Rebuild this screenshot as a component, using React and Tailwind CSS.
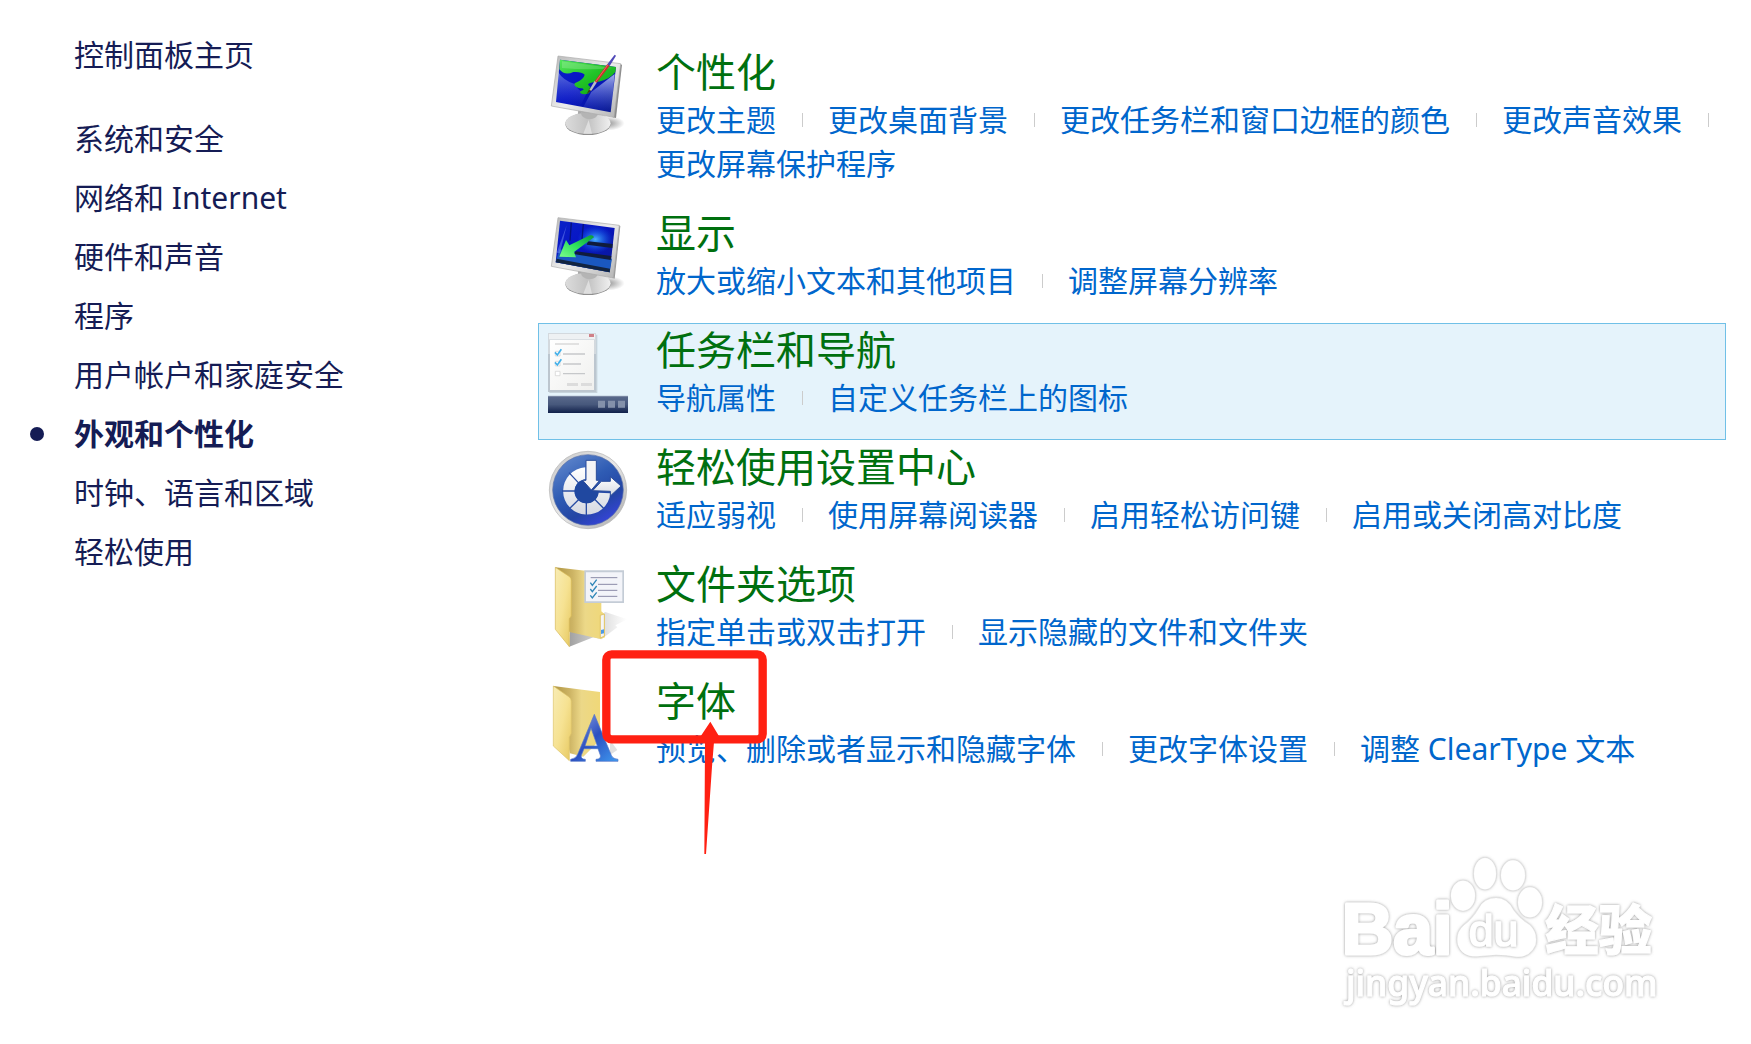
import React from "react";

const sidebarItems = [
  "系统和安全",
  "网络和 Internet",
  "硬件和声音",
  "程序",
  "用户帐户和家庭安全",
  "外观和个性化",
  "时钟、语言和区域",
  "轻松使用",
];

function Stand({ id }) {
  return (
    <>
      <ellipse cx="232" cy="250" rx="52" ry="22" fill={`url(#${id}-shadow)`} />
      <path d="M146 203 L214 216 L208 236 L142 232 Z" fill="#a9a9a9" />
      <ellipse cx="174" cy="252" rx="68" ry="33" fill="#8f8f8f" />
      <ellipse cx="174" cy="250" rx="68" ry="32" fill={`url(#${id}-base)`} />
      <path d="M152 216 L204 222 Q200 236 178 238 Q154 236 152 216 Z" fill="#b4b4b4" />
      <path d="M176 240 L160 281 L186 281 Z" fill="#fff" opacity=".45" />
    </>
  );
}

function MonitorDefs({ id }) {
  return (
    <defs>
      <linearGradient id={`${id}-screen`} x1="0" y1="0" x2="1" y2="1">
        <stop offset="0" stopColor="#0a22c8" />
        <stop offset=".45" stopColor="#0714c4" />
        <stop offset="1" stopColor="#0a1a8c" />
      </linearGradient>
      <linearGradient id={`${id}-frame`} x1="0" y1="0" x2="1" y2="1">
        <stop offset="0" stopColor="#b9b9b9" />
        <stop offset=".5" stopColor="#ececec" />
        <stop offset="1" stopColor="#b2b2b2" />
      </linearGradient>
      <linearGradient id={`${id}-base`} x1="0" y1="0" x2="1" y2="0">
        <stop offset="0" stopColor="#dcdcdc" />
        <stop offset=".5" stopColor="#c2c2c2" />
        <stop offset="1" stopColor="#f0f0f0" />
      </linearGradient>
      <radialGradient id={`${id}-shadow`}>
        <stop offset="0" stopColor="#777" stopOpacity=".8" />
        <stop offset="1" stopColor="#777" stopOpacity="0" />
      </radialGradient>
      <linearGradient id={`${id}-glare`} x1="0" y1="0" x2="0" y2="1">
        <stop offset="0" stopColor="#dfe8ff" stopOpacity=".9" />
        <stop offset="1" stopColor="#7d96ee" stopOpacity="0" />
      </linearGradient>
      <linearGradient id={`${id}-green`} x1="0" y1="0" x2="1" y2="1">
        <stop offset="0" stopColor="#56e65c" />
        <stop offset=".5" stopColor="#22c428" />
        <stop offset="1" stopColor="#0aa012" />
      </linearGradient>
      <radialGradient id={`${id}-glow`}>
        <stop offset="0" stopColor="#48b4ff" />
        <stop offset="1" stopColor="#0a5cf0" stopOpacity="0" />
      </radialGradient>
      <linearGradient id={`${id}-arrow`} x1="1" y1="0" x2="0" y2="1">
        <stop offset="0" stopColor="#0c9a38" />
        <stop offset=".5" stopColor="#2fe05c" />
        <stop offset="1" stopColor="#7dff8c" />
      </linearGradient>
    </defs>
  );
}

function PersonalizeIcon() {
  return (
    <svg viewBox="48 39 252 252" className="size-[84px] shrink-0" aria-hidden="true">
      <MonitorDefs id="pz" />
      <Stand id="pz" />
      <path d="M266 71 L276 74 L258 234 L248 232 Z" fill="#8c8c8c" />
      <path d="M84 48 L272 71 L252 232 L64 198 Z" fill="url(#pz-frame)" stroke="#aaa" strokeWidth="2" />
      <path d="M90 59 L258 81 L242 217 L78 186 Z" fill="url(#pz-screen)" />
      <path d="M84 95 Q98 120 134 132 Q150 160 170 160 L150 200 L78 186 Z" fill="url(#pz-glare)" opacity=".45" />
      <path d="M184 156 L254 102 L243 217 L160 201 Z" fill="url(#pz-glare)" opacity=".8" />
      <path
        d="M90 59 L258 81 L256 96 Q240 118 206 125 Q176 126 174 134 Q190 146 176 160 Q160 166 150 158 Q150 152 160 150 Q164 144 146 144 Q130 138 134 130 Q162 118 164 104 Q154 94 130 96 Q104 108 88 88 Z"
        fill="url(#pz-green)"
      />
      <path d="M96 64 L248 84 Q180 92 96 84 Z" fill="#fff" opacity=".18" />
      <path d="M170 162 L180 144 L188 148 Z" fill="#4b2c12" />
      <path d="M178 150 L194 122 L201 127 L184 152 Z" fill="#b8bcc4" />
      <path d="M194 124 L232 72 L239 77 L200 128 Z" fill="#cf2a2a" />
      <path d="M197 125 L234 74" stroke="#f58a7c" strokeWidth="2" />
      <path d="M232 73 L254 44 L258 47 L239 78 Z" fill="#4f48b8" />
    </svg>
  );
}

function DisplayIcon() {
  return (
    <svg viewBox="48 42 252 252" className="size-[84px] shrink-0" aria-hidden="true">
      <MonitorDefs id="dp" />
      <Stand id="dp" />
      <path d="M262 76 L271 78 L254 236 L246 233 Z" fill="#9a9a9a" />
      <path d="M84 53 L268 76 L250 234 L64 199 Z" fill="url(#dp-frame)" stroke="#aaa" strokeWidth="2" />
      <path d="M90 62 L254 84 L239 217 L77 187 Z" fill="url(#dp-screen)" />
      <path d="M88 148 L246 176 L239 217 L77 187 Z" fill="#1a58c0" />
      <ellipse cx="196" cy="118" rx="54" ry="42" fill="url(#dp-glow)" />
      <path d="M124 68 L120 122 M160 72 L156 118" stroke="#06127c" strokeWidth="4" />
      <path d="M174 124 L248 132 L247 144 L170 134 Z" fill="#101c3c" />
      <path d="M138 154 L244 168 L242 180 L130 162 Z" fill="#101c3c" />
      <path d="M80 176 L240 206 L239 217 L77 187 Z" fill="#122440" />
      <path d="M110 76 L80 158 L90 160 Z" fill="#8ea8ff" opacity=".4" />
      <path d="M88 170 L108 120 L118 136 L180 106 Q190 104 192 112 L132 156 L138 172 Z" fill="url(#dp-arrow)" />
    </svg>
  );
}

function TaskbarIcon() {
  return (
    <svg viewBox="48 63 252 252" className="size-[84px] shrink-0" aria-hidden="true">
      <defs>
        <linearGradient id="tb-bar" x1="0" y1="0" x2="0" y2="1">
          <stop offset="0" stopColor="#5a6a8c" />
          <stop offset=".5" stopColor="#47587c" />
          <stop offset="1" stopColor="#10204a" />
        </linearGradient>
        <linearGradient id="tb-page" x1="0" y1="0" x2="1" y2="1">
          <stop offset="0" stopColor="#fff" />
          <stop offset="1" stopColor="#f0f0ee" />
        </linearGradient>
      </defs>
      <path d="M58 74 H202 V249 H58 Z" fill="#9aa5b0" opacity=".4" />
      <path d="M54 69 H198 V246 H54 Z" fill="#bcc6cf" />
      <path d="M54 69 H198 V132 H54 Z" fill="#d3d9de" />
      <path d="M57 72 H195 V88 H57 Z" fill="#eef1f3" />
      <path d="M60 90 H192 V240 H60 Z" fill="url(#tb-page)" />
      <path d="M177 72 H192 V81 H177 Z" fill="#cf8088" />
      <path d="M75 102 H147" stroke="#dcdcdc" strokeWidth="5" />
      <path d="M99 132 H165 M99 162 H153 M99 191 H165" stroke="#c6c8ca" strokeWidth="4" />
      <path d="M76 124 H90 V138 H76 Z M76 154 H90 V168 H76 Z M76 184 H90 V197 H76 Z" fill="#fff" stroke="#cfcfcf" strokeWidth="2" />
      <path d="M75 127 L82 135 L94 118 M75 157 L82 165 L94 148" fill="none" stroke="#42b0ea" strokeWidth="5" />
      <path d="M111 219 H144 V228 H111 Z M153 219 H186 V228 H153 Z" fill="#dcdcdc" />
      <path d="M54 258 H294 V309 H54 Z" fill="url(#tb-bar)" />
      <path d="M54 259 H294" stroke="#7f8ba6" strokeWidth="3" />
      <path d="M204 272 H225 V293 H204 Z M234 272 H255 V293 H234 Z M264 272 H285 V293 H264 Z" fill="#8491aa" />
    </svg>
  );
}

function EaseOfAccessIcon() {
  return (
    <svg viewBox="48 24 252 252" className="size-[84px] shrink-0" aria-hidden="true">
      <defs>
        <linearGradient id="ea-disc" x1=".2" y1="0" x2=".8" y2="1">
          <stop offset="0" stopColor="#5f86cc" />
          <stop offset=".4" stopColor="#2f5cb4" />
          <stop offset=".7" stopColor="#2345a4" />
          <stop offset="1" stopColor="#3a44e4" />
        </linearGradient>
        <linearGradient id="ea-rim" x1="0" y1="0" x2="1" y2="1">
          <stop offset="0" stopColor="#c8c8c8" />
          <stop offset=".5" stopColor="#e8e8e8" />
          <stop offset="1" stopColor="#a8a8a8" />
        </linearGradient>
        <linearGradient id="ea-white" x1="0" y1="0" x2="0" y2="1">
          <stop offset="0" stopColor="#fff" />
          <stop offset="1" stopColor="#d5d9e2" />
        </linearGradient>
      </defs>
      <circle cx="174" cy="150" r="116" fill="url(#ea-rim)" stroke="#b2b2b2" strokeWidth="2" />
      <circle cx="174" cy="150" r="106" fill="url(#ea-disc)" stroke="#5f74a8" strokeWidth="2" />
      <path
        d="M166 82 A71 71 0 1 0 241 160 L205 158 A36 36 0 1 1 166 118 Z"
        fill="url(#ea-white)"
      />
      <path
        d="M117 98 L147 130 M96 153 L136 153 M118 206 L147 178 M169 228 L169 186 M222 206 L194 178"
        stroke="#2a4ea4"
        strokeWidth="4"
      />
      <circle cx="170" cy="154" r="36" fill="#2048a0" />
      <path d="M188 152 L214 124 H241 V110 L273 138 L241 168 V154 Z" fill="url(#ea-white)" stroke="#2c4d9a" strokeWidth="3" />
      <path d="M168 61 H199 V121 H209 L184 150 L158 121 H168 Z" fill="#f4f4f6" stroke="#2c4d9a" strokeWidth="3" />
    </svg>
  );
}

function FolderDefs({ id }) {
  return (
    <defs>
      <linearGradient id={`${id}-front`} x1="0" y1="0" x2="1" y2="1">
        <stop offset="0" stopColor="#f8ecb4" />
        <stop offset=".5" stopColor="#f6e292" />
        <stop offset="1" stopColor="#e6c860" />
      </linearGradient>
      <linearGradient id={`${id}-back`} x1="0" y1="0" x2="1" y2="0">
        <stop offset="0" stopColor="#b09644" />
        <stop offset=".35" stopColor="#cdb464" />
        <stop offset=".6" stopColor="#ecd888" />
        <stop offset="1" stopColor="#f0d878" />
      </linearGradient>
      <linearGradient id={`${id}-shade`} x1="0" y1="0" x2="1" y2="0">
        <stop offset="0" stopColor="#777" stopOpacity=".7" />
        <stop offset="1" stopColor="#999" stopOpacity="0" />
      </linearGradient>
      <linearGradient id={`${id}-letter`} x1="0" y1="0" x2="1" y2="1">
        <stop offset="0" stopColor="#9aaee8" />
        <stop offset=".5" stopColor="#2b4fc0" />
        <stop offset="1" stopColor="#3f9af0" />
      </linearGradient>
    </defs>
  );
}

function FolderOptionsIcon() {
  return (
    <svg viewBox="48 45 252 252" className="size-[84px] shrink-0" aria-hidden="true">
      <FolderDefs id="fo" />
      <path d="M118 290 L190 262 L214 268 L262 232 L256 226 L292 208 L226 186 L120 246 Z" fill="url(#fo-shade)" />
      <path d="M76 52 L166 62 L214 150 V184 L225 194 V262 L212 267 L118 246 Z" fill="url(#fo-back)" />
      <path d="M211 196 L223 192 V258 L211 264 Z" fill="#f5f5f5" stroke="#d6b448" strokeWidth="2" />
      <path d="M213 240 L222 238 V250 L213 252 Z" fill="#4c9ae8" />
      <path d="M76 52 L119 80 Q124 84 124 92 V198 L118 206 V290 L76 238 Z" fill="url(#fo-front)" stroke="#d6b854" strokeWidth="2" />
      <path d="M163 61 H282 V159 H163 Z" fill="#c4ccd6" />
      <path d="M168 67 H277 V154 H168 Z" fill="#f3f4f9" />
      <path d="M182 83 H262 M204 103 H262 M204 121 H262 M204 139 H262" stroke="#8b8ba8" strokeWidth="3" />
      <path d="M181 98 L187 106 L200 89 M181 117 L187 125 L200 108 M181 136 L187 144 L200 127" fill="none" stroke="#2f86b8" strokeWidth="4" />
    </svg>
  );
}

function FontsIcon() {
  return (
    <svg viewBox="48 126 252 252" className="size-[84px] shrink-0" aria-hidden="true">
      <FolderDefs id="ft" />
      <path d="M70 138 L210 156 V300 L160 350 L120 340 Z" fill="url(#ft-back)" />
      <path d="M240 300 L262 330 L240 345 Z" fill="#999" opacity=".3" />
      <path d="M70 138 L116 170 Q124 176 124 184 V280 L118 292 V362 L70 318 Z" fill="url(#ft-front)" stroke="#dcc268" strokeWidth="2" />
      <path
        fillRule="evenodd"
        d="M193 223 L244 346 Q248 357 264 358 V364 H198 V358 Q214 357 211 346 L204 326 H162 L154 346 Q151 357 166 358 V364 H122 V358 Q138 356 143 343 Z M183 264 L165 318 H202 Z"
        fill="url(#ft-letter)"
        stroke="#5575c8"
        strokeWidth="2"
      />
    </svg>
  );
}

function Annotation() {
  return (
    <svg
      viewBox="216 30 495 612"
      className="pointer-events-none absolute -top-[25px] left-[63px] h-[204px] w-[165px]"
      aria-hidden="true"
    >
      <rect x="229" y="43" width="469" height="255" rx="16" fill="none" stroke="#ff2012" strokeWidth="25" />
      <path d="M541 245 L568 290 L552 306 L546 380 L528 642 H523 L525 306 L510 292 Z" fill="#ff2012" />
    </svg>
  );
}

const categories = [
  {
    title: "个性化",
    Icon: PersonalizeIcon,
    links: ["更改主题", "更改桌面背景", "更改任务栏和窗口边框的颜色", "更改声音效果", "更改屏幕保护程序"],
  },
  { title: "显示", Icon: DisplayIcon, links: ["放大或缩小文本和其他项目", "调整屏幕分辨率"] },
  { title: "任务栏和导航", Icon: TaskbarIcon, links: ["导航属性", "自定义任务栏上的图标"], active: true },
  {
    title: "轻松使用设置中心",
    Icon: EaseOfAccessIcon,
    links: ["适应弱视", "使用屏幕阅读器", "启用轻松访问键", "启用或关闭高对比度"],
  },
  { title: "文件夹选项", Icon: FolderOptionsIcon, links: ["指定单击或双击打开", "显示隐藏的文件和文件夹"] },
  {
    title: "字体",
    Icon: FontsIcon,
    links: ["预览、删除或者显示和隐藏字体", "更改字体设置", "调整 ClearType 文本"],
    marked: true,
  },
];

function Category({ title, Icon, links, active, marked }) {
  return (
    <section
      className={
        active
          ? "relative flex border border-[#70c0e7] bg-[#e5f3fb] pb-[19px] pl-[7px]"
          : "relative flex border border-transparent pb-[19px] pl-[7px]"
      }
    >
      <div className="mt-[7px] -mb-2 shrink-0">
        <Icon />
      </div>
      <div className="ml-[26px] min-w-0 flex-1">
        <h2 className="text-[40px] leading-[52px] text-[#00700f]">
          <a href="#">{title}</a>
        </h2>
        <ul className="flex flex-wrap gap-x-[25px] text-[30px] leading-[44px] text-[#0066cc]">
          {links.map((link, i) => (
            <li key={link} className="flex items-center whitespace-nowrap">
              <a href="#">{link}</a>
              {i < links.length - 1 && <span className="ml-[26px] h-[14px] w-px bg-[#cccccc]" />}
            </li>
          ))}
        </ul>
      </div>
      {marked && <Annotation />}
    </section>
  );
}

function Watermark() {
  return (
    <svg
      viewBox="0 0 1050 540"
      className="pointer-events-none absolute right-[71px] bottom-6 h-[180px] w-[350px]"
      role="img"
      aria-label="Baidu 经验"
    >
      <defs>
        <filter id="wm-halo" x="-10%" y="-10%" width="120%" height="120%">
          <feDropShadow dx="0" dy="0" stdDeviation="4" floodColor="#8c8c8c" floodOpacity=".9" />
        </filter>
      </defs>
      <g fill="#fff" stroke="#fff" strokeLinejoin="round">
        <g filter="url(#wm-halo)">
          <ellipse cx="399" cy="167" rx="36" ry="45" />
          <ellipse cx="465" cy="101" rx="33" ry="47" />
          <ellipse cx="549" cy="106" rx="36" ry="45" />
          <ellipse cx="600" cy="187" rx="36" ry="45" />
        </g>
        <g filter="url(#wm-halo)">
          <path d="M498 174 Q532 174 550 210 Q570 238 600 256 Q624 280 616 315 Q600 352 560 350 Q528 344 498 344 Q470 346 440 349 Q396 350 384 314 Q376 278 402 256 Q428 236 446 206 Q462 174 498 174 Z" />
        </g>
        <g className="font-['Liberation_Sans'] font-bold" strokeWidth="9" filter="url(#wm-halo)">
          <text x="35" y="342" fontSize="214">Bai</text>
        </g>
        <g className="font-['Noto_Sans_CJK_SC'] font-black" strokeWidth="3" filter="url(#wm-halo)">
          <text x="646" y="330" fontSize="160">经验</text>
        </g>
        <g className="font-['Liberation_Sans'] font-normal" strokeWidth="5" filter="url(#wm-halo)">
          <text x="416" y="317" fontSize="134">du</text>
        </g>
        <g className="font-['Noto_Sans'] font-medium" strokeWidth="3" filter="url(#wm-halo)">
          <text x="48" y="467" fontSize="106">jingyan.baidu.com</text>
        </g>
      </g>
    </svg>
  );
}

export default function App() {
  return (
    <div className="relative flex min-h-screen bg-white font-['Noto_Sans','Noto_Sans_CJK_SC',sans-serif]">
      <nav className="w-[538px] shrink-0 pt-[25px] pl-[74px] text-[30px] leading-[59px] text-[#151c55]">
        <a href="#" className="block">控制面板主页</a>
        <ul className="mt-[25px]">
          {sidebarItems.map((item) => {
            const current = item === "外观和个性化";
            return (
              <li key={item} className={current ? "relative font-bold" : ""}>
                {current && (
                  <span className="absolute top-1/2 -left-[44px] size-[14px] -translate-y-1/2 rounded-full bg-[#151c55]" />
                )}
                <a href="#" aria-current={current ? "page" : undefined}>{item}</a>
              </li>
            );
          })}
        </ul>
      </nav>
      <main className="min-w-0 flex-1 pt-[45px] pr-[25px]">
        {categories.map((category) => (
          <Category key={category.title} {...category} />
        ))}
      </main>
      <Watermark />
    </div>
  );
}
